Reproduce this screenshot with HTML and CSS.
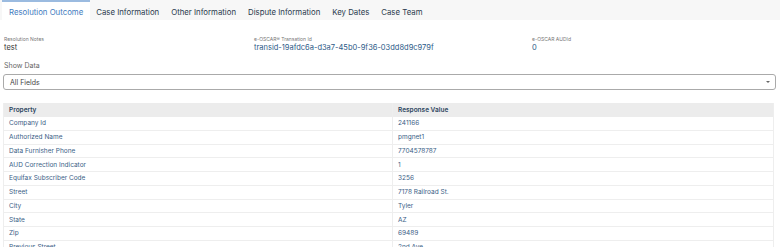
FILE: index.html
```html
<!DOCTYPE html>
<html lang="en">
<head>
    <meta charset="UTF-8">
    <title>Resolution Outcome</title>
    <link rel="stylesheet" href="styles.css">
</head>
<body>
    <nav class="tabs">
        <a class="tab active" href="#">Resolution Outcome</a>
        <a class="tab" href="#">Case Information</a>
        <a class="tab" href="#">Other Information</a>
        <a class="tab" href="#">Dispute Information</a>
        <a class="tab" href="#">Key Dates</a>
        <a class="tab" href="#">Case Team</a>
    </nav>

    <div class="content">
        <div class="details">
            <div class="field field-notes">
                <div class="field-label">Resolution Notes</div>
                <div class="field-value plain">test</div>
            </div>
            <div class="field field-trans">
                <div class="field-label">e-OSCAR® Transation Id</div>
                <div class="field-value">transid-19afdc6a-d3a7-45b0-9f36-03dd8d9c979f</div>
            </div>
            <div class="field">
                <div class="field-label">e-OSCAR AUDId</div>
                <div class="field-value">0</div>
            </div>
        </div>

        <label class="show-label">Show Data</label>
        <div class="select-box">
            <span>All Fields</span>
            <span class="caret"></span>
        </div>

        <table class="data-table">
            <thead>
                <tr><th>Property</th><th>Response Value</th></tr>
            </thead>
            <tbody id="rows"></tbody>
        </table>
    </div>

    <script>
        const rows = [
            ['Company Id', '241166'],
            ['Authorized Name', 'pmgnet1'],
            ['Data Furnisher Phone', '7704578787'],
            ['AUD Correction Indicator', '1'],
            ['Equifax Subscriber Code', '3256'],
            ['Street', '7178 Railroad St.'],
            ['City', 'Tyler'],
            ['State', 'AZ'],
            ['Zip', '69489'],
            ['Previous Street', '2nd Ave']
        ];

        const tbody = document.getElementById('rows');
        rows.forEach(r => {
            const tr = document.createElement('tr');
            tr.innerHTML = `<td>${r[0]}</td><td>${r[1]}</td>`;
            tbody.appendChild(tr);
        });
    </script>
</body>
</html>
```

FILE: styles.css
```css
body {
    font-family: "Inter", "Open Sans", sans-serif;
    background-color: #fff;
    margin: 0;
    color: #2d4a6b;
}

.tabs {
    display: flex;
    background-color: #f7f7f7;
    height: 20px;
    padding-left: 2px;
}

.tab {
    display: block;
    padding: 5px 7px 0 7px;
    font-size: 7.8px;
    color: #2a3a4d;
    text-decoration: none;
    border-top: 2px solid transparent;
}

.tab + .tab {
    padding-left: 6px;
    padding-right: 6px;
}

.tab.active {
    background-color: #fff;
    color: #3f7cc0;
    border-top: 2px solid #9bbbe0;
}

.content {
    padding: 0 4px;
}

.details {
    display: flex;
    padding-top: 16px;
}

.field-notes {
    width: 250px;
}

.field-trans {
    width: 278px;
}

.field-label {
    font-size: 5px;
    color: #777;
    line-height: 7px;
}

.field-value {
    font-size: 7.5px;
    color: #2b5a87;
    line-height: 9px;
}

.field-value.plain {
    color: #333;
}

.show-label {
    display: block;
    margin-top: 9px;
    font-size: 7px;
    color: #666;
}

.select-box {
    display: flex;
    justify-content: space-between;
    align-items: center;
    margin: 4px 0 0 -1px;
    height: 14px;
    border: 1px solid #aaa;
    border-radius: 3px;
    padding: 0 5px 0 6px;
    font-size: 7px;
    color: #444;
}

.caret {
    width: 0;
    height: 0;
    border-left: 2px solid transparent;
    border-right: 2px solid transparent;
    border-top: 2px solid #666;
}

.data-table {
    width: calc(100% - 1px);
    margin: 13px 0 0 -1px;
    border-collapse: collapse;
    font-size: 6.5px;
    border-left: 1px solid #eee;
    border-right: 1px solid #eee;
}

.data-table th {
    background-color: #ececec;
    text-align: left;
    font-weight: 600;
    color: #2d4560;
    height: 14px;
    padding: 0 5px;
}

.data-table td {
    height: 12.75px;
    padding: 0 5px;
    border-bottom: 1px solid #eee;
    color: #3a5e86;
}

.data-table th:first-child,
.data-table td:first-child {
    width: 378px;
    border-right: 1px solid #eee;
}
```
